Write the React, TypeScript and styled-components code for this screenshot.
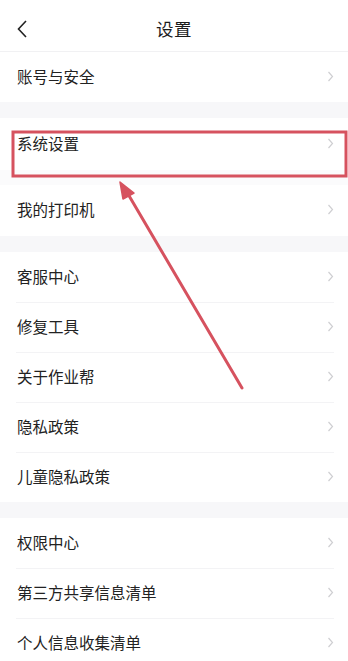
import React from "react";
import styled, { createGlobalStyle } from "styled-components";

const GlobalStyle = createGlobalStyle`
  html, body { margin: 0; padding: 0; background: #ffffff; }
  body { font-family: "Noto Sans CJK SC", "Noto Sans", sans-serif; }
  * { box-sizing: border-box; }
`;

const Page = styled.div`
  position: relative;
  width: 348px;
  height: 661px;
  overflow: hidden;
  background: #ffffff;
  display: flex;
  flex-direction: column;
`;

const Header = styled.div`
  height: 52px;
  flex-shrink: 0;
  display: flex;
  align-items: center;
  justify-content: center;
  position: relative;
  border-bottom: 1px solid #f1f1f3;
`;

const BackButton = styled.div`
  position: absolute;
  left: 16px;
  top: 19px;
  width: 14px;
  height: 20px;
  display: flex;
  align-items: center;
`;

const Title = styled.div`
  font-size: 17.5px;
  line-height: 20px;
  color: #1c1c1c;
  letter-spacing: 0.5px;
  margin-top: 6px;
`;

const Gap = styled.div<{ $h: number; $tone?: string }>`
  height: ${(p) => p.$h}px;
  flex-shrink: 0;
  background: ${(p) => p.$tone ?? "#f7f7f9"};
`;

const Section = styled.div`
  display: flex;
  flex-direction: column;
  flex-shrink: 0;
`;

const Row = styled.div<{ $h?: number; $divider?: boolean }>`
  height: ${(p) => p.$h ?? 50}px;
  flex-shrink: 0;
  margin: 0 14px 0 16px;
  display: flex;
  align-items: center;
  justify-content: space-between;
  border-top: ${(p) => (p.$divider ? "1px solid #f3f3f5" : "none")};
`;

const Label = styled.span`
  font-size: 15.5px;
  line-height: 18px;
  color: #222222;
  margin-left: 1px;
  margin-bottom: 3px;
`;

const Overlay = styled.svg`
  position: absolute;
  left: 0;
  top: 0;
  pointer-events: none;
`;

const Chevron = () => (
  <svg width="7" height="11" viewBox="0 0 7 11" style={{ marginBottom: 2 }}>
    <path d="M1.5 1 L5.5 5.5 L1.5 10" fill="none" stroke="#cfcfd2" strokeWidth="1.2" />
  </svg>
);

const Item: React.FC<{ label: string; h?: number; divider?: boolean }> = ({ label, h, divider }) => (
  <Row $h={h} $divider={divider}>
    <Label>{label}</Label>
    <Chevron />
  </Row>
);

export default function App() {
  return (
    <>
      <GlobalStyle />
      <Page>
        <Header>
          <BackButton>
            <svg width="12" height="20" viewBox="0 0 12 20">
              <path d="M10 2 L2.5 10 L10 18" fill="none" stroke="#222" strokeWidth="1.6" />
            </svg>
          </BackButton>
          <Title>设置</Title>
        </Header>
        <Section>
          <Item label="账号与安全" />
        </Section>
        <Gap $h={16} />
        <Section>
          <Item label="系统设置" h={52} />
        </Section>
        <Gap $h={15} $tone="#fbfbfc" />
        <Section>
          <Item label="我的打印机" h={51} />
        </Section>
        <Gap $h={16} />
        <Section>
          <Item label="客服中心" />
          <Item label="修复工具" divider />
          <Item label="关于作业帮" divider />
          <Item label="隐私政策" divider />
          <Item label="儿童隐私政策" divider />
        </Section>
        <Gap $h={16} />
        <Section>
          <Item label="权限中心" />
          <Item label="第三方共享信息清单" divider />
          <Item label="个人信息收集清单" divider />
        </Section>
        <Overlay width="348" height="661" viewBox="0 0 348 661">
          <rect x="13" y="132" width="333" height="44" fill="none" stroke="#d6525f" strokeWidth="3" />
          <line x1="242" y1="388" x2="128" y2="194" stroke="#d6525f" strokeWidth="3" strokeLinecap="round" />
          <polygon points="120,182 134,193 123,199" fill="#d6525f" stroke="#d6525f" strokeWidth="1.5" strokeLinejoin="round" />
        </Overlay>
      </Page>
    </>
  );
}
